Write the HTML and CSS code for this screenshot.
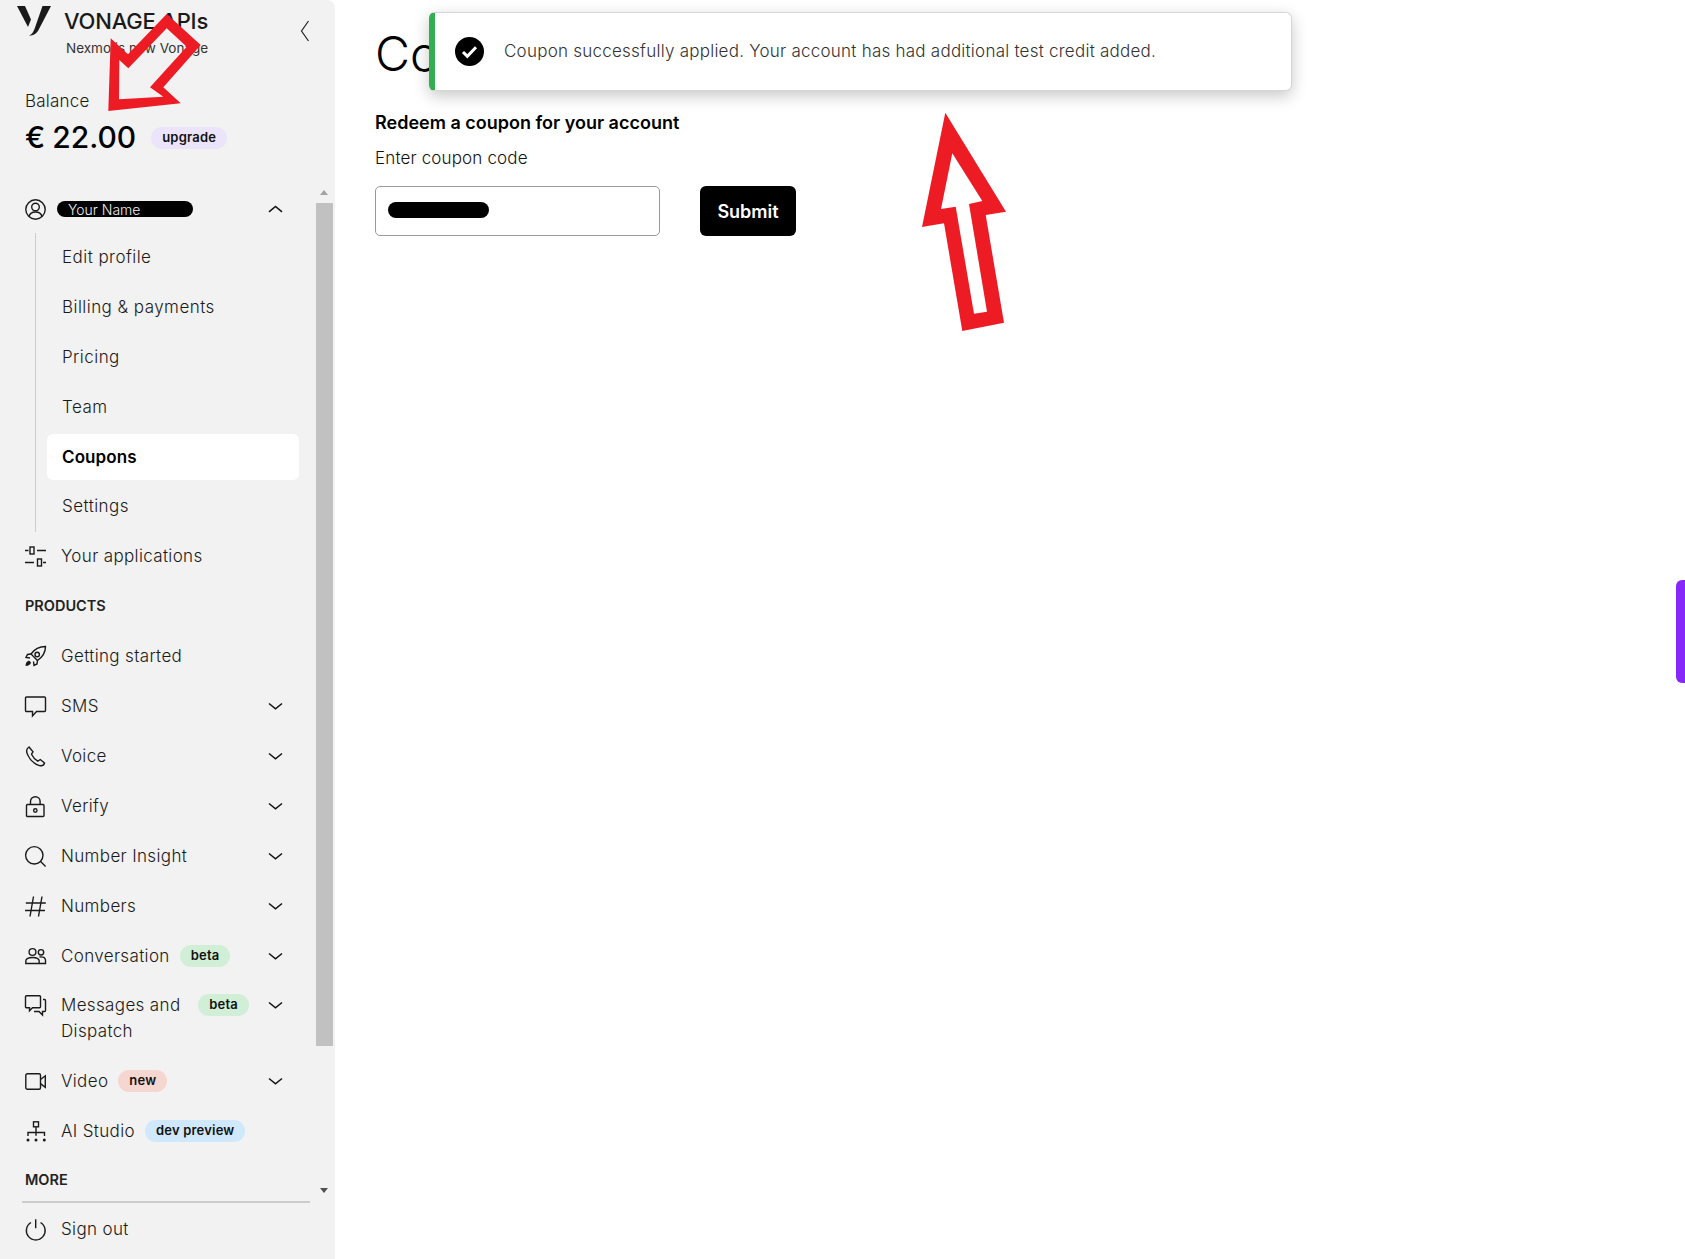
FILE: index.html
```html
<!DOCTYPE html>
<html lang="en">
<head>
<meta charset="utf-8">
<title>Coupons</title>
<link rel="stylesheet" href="styles.css">
</head>
<body>
<div class="page">
  <aside class="sidebar">
    <header class="brand">
      <svg class="logo" viewBox="0 0 34 30"><path d="M0 0h8L14 13.500 11 21z"/><path d="M25.500 0h8.500L21.500 24c-1.800 3.500-4.500 5.500-9.500 5.500 3-1 4-3 5.500-6.500z"/></svg>
      <div class="brand-text">
        <div class="brand-name">VONAGE APIs</div>
        <div class="brand-sub">Nexmo is now Vonage</div>
      </div>
      <svg class="collapse" viewBox="0 0 10 22"><path d="M8.500 1 1.500 11l7 10"/></svg>
    </header>
    <section class="balance">
      <div class="balance-label">Balance</div>
      <div class="balance-row">
        <span class="balance-value">€ 22.00</span>
        <span class="pill pill-purple">upgrade</span>
      </div>
    </section>
    <div class="scroller">
      <nav class="nav">
        <div class="row row-user">
          <svg class="ico" viewBox="0 0 21 21"><circle cx="10.500" cy="10.500" r="9.700"/><circle cx="10.500" cy="8" r="3.800"/><path d="M4 17.500c.8-3 3.300-4.500 6.500-4.500s5.700 1.500 6.500 4.500"/></svg>
          <span class="redact-name">Your Name</span>
          <svg class="chev" viewBox="0 0 15 8"><path d="M1 6.800 7.500 1.500l6.500 5.300"/></svg>
        </div>
        <div class="sub">
          <a class="sub-item">Edit profile</a>
          <a class="sub-item">Billing &amp; payments</a>
          <a class="sub-item">Pricing</a>
          <a class="sub-item">Team</a>
          <a class="sub-item active">Coupons</a>
          <a class="sub-item">Settings</a>
        </div>
        <div class="row">
          <svg class="ico" viewBox="0 0 21 21"><path d="M0 4.500h3.500M12 4.500h9M0 16.500h9M18 16.500h3"/><rect x="5" y="1" width="4" height="7"/><rect x="12.500" y="13" width="4" height="7"/></svg>
          <span class="label">Your applications</span>
        </div>
        <div class="heading">PRODUCTS</div>
        <div class="row">
          <svg class="ico" viewBox="0 0 21 21"><path d="M20.500.5C15 .5 9.500 3 6 8l6.500 6.500c5-3.500 8-9 8-14z"/><path d="M6 8l-3.500.5-1.500 3 4 .5M12.500 14.500l-.5 3.500-3 1.500-.5-4"/><circle cx="12.200" cy="8.500" r="2.200"/><path class="solid" d="M4 14.500c-2 .5-3.500 2.500-3.500 5.500 3 0 5-1.500 5.500-3.500z"/></svg>
          <span class="label">Getting started</span>
        </div>
        <div class="row">
          <svg class="ico" viewBox="0 0 21 21"><path d="M1.500 1h18a1 1 0 0 1 1 1v12.500a1 1 0 0 1-1 1H11.500L7.500 20v-4.500h-6a1 1 0 0 1-1-1V2a1 1 0 0 1 1-1z"/></svg>
          <span class="label">SMS</span>
          <svg class="chev" viewBox="0 0 15 8"><path d="M1 1.500 7.500 6.800 14 1.500"/></svg>
        </div>
        <div class="row">
          <svg class="ico" viewBox="0 0 21 21"><path d="M4 1 C1.500 2.500 1 5.500 2.800 9 5 14 9.500 18 14.500 19.600c2.500.6 4.400-.4 5-2.600l-4.200-3.500-2.500 1.600C10.500 13.800 8 11.300 6.500 8.200L8 5.700z"/></svg>
          <span class="label">Voice</span>
          <svg class="chev" viewBox="0 0 15 8"><path d="M1 1.500 7.500 6.800 14 1.500"/></svg>
        </div>
        <div class="row">
          <svg class="ico" viewBox="0 0 21 21"><rect x="1.500" y="8.500" width="17.500" height="12" rx="1"/><path d="M5.500 8.500V5.500a4.800 4.800 0 0 1 9.600 0v3"/><circle cx="10.300" cy="14.500" r="1.700"/></svg>
          <span class="label">Verify</span>
          <svg class="chev" viewBox="0 0 15 8"><path d="M1 1.500 7.500 6.800 14 1.500"/></svg>
        </div>
        <div class="row">
          <svg class="ico" viewBox="0 0 21 21"><circle cx="9.300" cy="9.300" r="8.700"/><path d="m15.600 15.600 5 5"/></svg>
          <span class="label">Number Insight</span>
          <svg class="chev" viewBox="0 0 15 8"><path d="M1 1.500 7.500 6.800 14 1.500"/></svg>
        </div>
        <div class="row">
          <svg class="ico" viewBox="0 0 21 21"><path d="M8.500.5 5 20.500M17 .5l-3.500 20M.8 7h20M0 14.500h20"/></svg>
          <span class="label">Numbers</span>
          <svg class="chev" viewBox="0 0 15 8"><path d="M1 1.500 7.500 6.800 14 1.500"/></svg>
        </div>
        <div class="row">
          <svg class="ico" viewBox="0 0 21 21"><circle cx="7.500" cy="6" r="3.400"/><circle cx="16" cy="6.300" r="2.700"/><path d="M.8 17.500v-2.200c0-2.500 3-3.800 6.700-3.800s6.700 1.300 6.700 3.800v2.200z"/><path d="M14.500 11c3.500-.5 6 .7 6 3.300v3.200h-6"/></svg>
          <span class="label">Conversation</span>
          <span class="pill pill-green">beta</span>
          <svg class="chev" viewBox="0 0 15 8"><path d="M1 1.500 7.500 6.800 14 1.500"/></svg>
        </div>
        <div class="row">
          <svg class="ico" viewBox="0 0 21 21"><path d="M1.500.8h13a1 1 0 0 1 1 1v10a1 1 0 0 1-1 1H7.500l-3 3v-3h-3a1 1 0 0 1-1-1v-10a1 1 0 0 1 1-1z"/><path d="M18 4.500h1.500a1 1 0 0 1 1 1v10a1 1 0 0 1-1 1h-2v3.500l-3.500-3.500H9"/></svg>
          <span class="label">Messages and Dispatch</span>
          <span class="pill pill-green">beta</span>
          <svg class="chev" viewBox="0 0 15 8"><path d="M1 1.500 7.500 6.800 14 1.500"/></svg>
        </div>
        <div class="row">
          <svg class="ico" viewBox="0 0 21 21"><rect x=".8" y="2.800" width="14.700" height="15.500" rx="1.500"/><path d="M15.500 8.500 20.300 4.800v11.500l-4.800-3.700"/></svg>
          <span class="label">Video</span>
          <span class="pill pill-red">new</span>
          <svg class="chev" viewBox="0 0 15 8"><path d="M1 1.500 7.500 6.800 14 1.500"/></svg>
        </div>
        <div class="row">
          <svg class="ico" viewBox="0 0 21 21"><rect x="8.500" y=".8" width="5" height="5"/><path d="M11 5.800v9M3 15v-3.500h16.500V15"/><circle class="solid" cx="3" cy="19" r="1.500"/><circle class="solid" cx="11" cy="19" r="1.500"/><circle class="solid" cx="19.300" cy="19" r="1.500"/></svg>
          <span class="label">AI Studio</span>
          <span class="pill pill-blue">dev preview</span>
        </div>
        <div class="heading heading-last">MORE</div>
      </nav>
      <div class="scrollbar">
        <span class="arrow-up"></span>
        <span class="thumb"></span>
        <span class="arrow-down"></span>
      </div>
    </div>
    <footer class="foot">
      <div class="row">
        <svg class="ico" viewBox="0 0 21 21"><path d="M6 3.500a9.400 9.400 0 1 0 9.500 0"/><path d="M10.700.3v9"/></svg>
        <span class="label">Sign out</span>
      </div>
    </footer>
  </aside>
  <main class="main">
    <h1 class="title">Coupons</h1>
    <h2 class="subtitle">Redeem a coupon for your account</h2>
    <div class="field-label">Enter coupon code</div>
    <div class="form">
      <div class="input"><span class="redact-code"></span></div>
      <button class="submit">Submit</button>
    </div>
  </main>
</div>
<div class="toast">
  <svg class="toast-ico" viewBox="0 0 29 29"><circle cx="14.500" cy="14.500" r="14.500"/><path d="m8 15 4.300 4.300 8.700-9"/></svg>
  <span>Coupon successfully applied. Your account has had additional test credit added.</span>
</div>
<div class="tab"></div>
<svg class="marks" viewBox="0 0 1685 1259">
  <path d="M108.300 111 110.700 38.300 128 54.300 166.700 14 200.700 45 163.300 87.300 180.700 103.300zM119 99.300 163.300 96.700 150 87.300 186.700 46.700 166.700 28.300 128.300 68.300 119.300 60z"/>
  <path d="M945.300 112.700 1006 211.700 985.700 215 1004 322.700 962.300 331 944 223.300 922 227zM952.300 153.300 941 209 955.700 206.700 974 313.700 987 311.700 969 204 982.300 201z"/>
</svg>
</body>
</html>
```
FILE: styles.css
```css
* { box-sizing: border-box; }
html, body { margin: 0; height: 100%; overflow: hidden; background: #fff; }
body { font-family: Inter, "Liberation Sans", sans-serif; color: #1a1a1a; font-size: 16px; }
.page { display: flex; height: 1259px; }

.sidebar { width: 335px; flex: none; background: #f2f2f2; border-top-right-radius: 8px; display: flex; flex-direction: column; }
.brand { display: flex; align-items: flex-start; height: 61px; padding: 6px 0 0 17px; }
.logo { width: 34px; height: 30px; fill: #1a1a1a; flex: none; }
.brand-text { margin-left: 13px; padding-top: 3px; }
.brand-name { font-size: 22px; line-height: 24px; font-weight: 500; color: #1a1a1a; letter-spacing: -.2px; }
.brand-sub { font-size: 13.500px; line-height: 16px; margin: 7px 0 0 2px; color: #333; }
.collapse { width: 10px; height: 22px; margin: 14px 25px 0 auto; fill: none; stroke: #222; stroke-width: 1.200; }

.balance { padding: 28px 25px 0; height: 124px; }
.balance-label { font-size: 17px; line-height: 24px; font-weight: 300; letter-spacing: .2px; }
.balance-row { display: flex; align-items: center; gap: 15px; margin-top: 7px; height: 34px; }
.balance-value { font-size: 30px; line-height: 34px; font-weight: 500; color: #000; word-spacing: -1px; }
.balance-row .pill { margin-top: 2px; }

.pill { flex: none; height: 22px; padding: 0 11px; border-radius: 11px; font-size: 13px; line-height: 21px; font-weight: 600; color: #111; letter-spacing: .2px; }
.pill-purple { background: #ece4fa; }
.pill-green { background: #d0efd6; }
.pill-red { background: #f5d6d0; }
.pill-blue { background: #d0e8fb; }

.scroller { display: flex; height: 1015px; flex: none; overflow: hidden; }
.nav { width: 316px; flex: none; padding: 0 0 0 25px; }
.row { display: flex; align-items: flex-start; gap: 15px; padding: 12px 0; line-height: 25.900px; width: 258px; font-weight: 300; font-size: 17px; letter-spacing: .35px; }
.row .pill { margin: 1px 4px 0 -5px; }
.ico { width: 21px; height: 21px; flex: none; margin-top: 2px; fill: none; stroke: #1a1a1a; stroke-width: 1.400; overflow: visible; }
.ico .solid { fill: #1a1a1a; stroke: none; }
.chev { width: 15px; height: 8px; flex: none; margin: 8px 0 0 auto; fill: none; stroke: #111; stroke-width: 1.500; }
.row-user { height: 48px; padding: 12px 0 0; }
.redact-name { background: #000; color: #eee; width: 136px; height: 16px; border-radius: 8px; margin: 4px 0 0 -4px; padding-left: 11px; font-size: 14px; line-height: 17px; letter-spacing: 0; }

.sub { margin-left: 10px; border-left: 1px solid #ccc; width: 264px; padding: 0 0 0 11px; }
.sub-item { display: block; height: 49.900px; line-height: 49.900px; padding-left: 15px; font-size: 17px; font-weight: 300; letter-spacing: .45px; color: #1a1a1a; }
.sub-item.active { height: 46px; line-height: 46px; margin: 1.400px 0 2.500px; background: #fff; border-radius: 6px; font-weight: 600; color: #000; letter-spacing: .1px; }
.heading { height: 49.900px; line-height: 47px; font-size: 14.500px; font-weight: 600; color: #222; }
.heading-last { line-height: 46px; }

.scrollbar { width: 17px; display: flex; flex-direction: column; align-items: center; position: relative; }
.thumb { width: 17px; height: 843px; margin-top: 18px; background: #c1c1c1; }
.arrow-up { position: absolute; top: 5px; left: 4px; border: 4.500px solid transparent; border-top: 0; border-bottom: 5px solid #a3a3a3; }
.arrow-down { position: absolute; top: 1003px; left: 4px; border: 4.500px solid transparent; border-bottom: 0; border-top: 5px solid #505050; }

.foot { margin: 1px 25px 0 22px; border-top: 2px solid #ccc; padding: 1.500px 0 0 3px; }

.main { flex: 1; padding: 21px 0 0 40px; }
.title { margin: 0; font-size: 48px; line-height: 66px; font-weight: 300; color: #000; }
.subtitle { margin: 25px 0 0; font-size: 18px; line-height: 22px; font-weight: 600; color: #000; }
.field-label { margin-top: 13px; font-size: 17px; line-height: 22px; font-weight: 300; letter-spacing: .15px; color: #111; }
.form { display: flex; gap: 40px; margin-top: 17px; }
.input { width: 285px; height: 50px; border: 1px solid #999; border-radius: 5px; background: #fff; padding: 15px 12px; }
.redact-code { display: block; width: 101px; height: 16px; background: #000; border-radius: 8px; }
.submit { width: 96px; height: 50px; border: 0; border-radius: 6px; background: #000; color: #fff; font: 600 18px Inter, "Liberation Sans", sans-serif; }

.toast { position: absolute; left: 429px; top: 12px; width: 863px; height: 79px; display: flex; align-items: center; gap: 20px; padding: 0 0 1px 20px; background: #fff; border: 1px solid #d6d6d6; border-left: 6px solid #34ae53; border-radius: 6px; box-shadow: 0 5px 16px rgba(0,0,0,.22); font-size: 17px; font-weight: 300; color: #333; letter-spacing: .24px; }
.toast-ico { width: 29px; height: 29px; flex: none; }
.toast-ico circle { fill: #000; }
.toast-ico path { fill: none; stroke: #fff; stroke-width: 3; }
.tab { position: absolute; right: 0; top: 580px; width: 9px; height: 103px; background: #8728fb; border-radius: 6px 0 0 6px; }
.marks { position: absolute; left: 0; top: 0; width: 1685px; height: 1259px; fill: #ed1c24; fill-rule: evenodd; pointer-events: none; }
```
